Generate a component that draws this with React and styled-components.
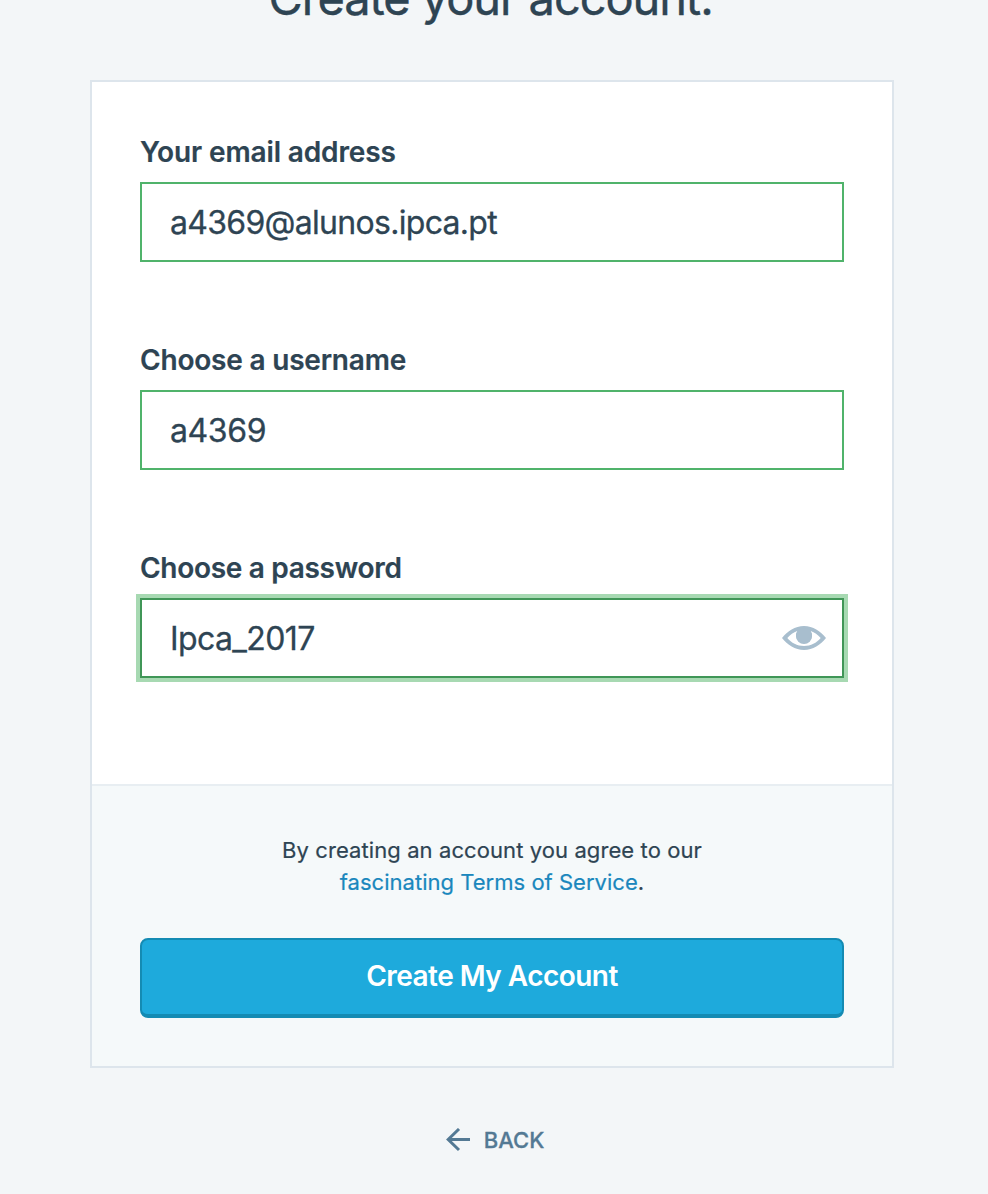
import React from 'react';
import styled, { createGlobalStyle } from 'styled-components';

const Global = createGlobalStyle`
  * { box-sizing: border-box; }
  html, body { margin: 0; height: 1194px; overflow: hidden; background: #f3f6f8; }
  body { font-family: Inter, sans-serif; color: #2e4453; }
`;
const Page = styled.main`
  display: flex; flex-direction: column; align-items: center;
  width: 988px; height: 1194px; padding-right: 4px; overflow: hidden;
`;
const Title = styled.h1`
  margin: -30px 3px 54px 0; height: 56px; line-height: 56px;
  font-size: 47px; font-weight: 400; white-space: nowrap;
  letter-spacing: -1.1px; -webkit-text-stroke: 0.4px currentColor;
`;
const Card = styled.form`
  width: 804px; height: 988px; flex: none; border: 2px solid #dde5ec; background: #fff;
  display: flex; flex-direction: column;
`;
const Fields = styled.div`
  height: 702px; padding: 48px 48px 0;
`;
const Field = styled.div`
  height: 208px;
`;
const Label = styled.label`
  display: block; height: 52px; line-height: 44px; font-size: 28px; font-weight: 600;
  white-space: nowrap; letter-spacing: ${p => p.$ls}px;
  -webkit-text-stroke: 0.2px currentColor;
`;
const InputBox = styled.div`
  height: 80px; display: flex; align-items: center; justify-content: space-between;
  padding: 0 16px 0 28px; background: #fff;
  border: 2px solid ${p => (p.$focus ? '#409657' : '#50b36b')};
  box-shadow: ${p => (p.$focus ? '0 0 0 4px #a7d9b2' : 'none')};
`;
const Value = styled.span`
  padding-top: 2px; font-size: 32px; line-height: 48px; white-space: nowrap;
  letter-spacing: ${p => p.$ls}px; -webkit-text-stroke: 0.3px currentColor;
`;
const Footer = styled.div`
  flex: 1; border-top: 2px solid #e8eef2; background: #f5f9fa; padding: 48px;
`;
const Terms = styled.p`
  margin: 0 0 40px; text-align: center; font-size: 22px; line-height: 32px; letter-spacing: 0.09px;
  -webkit-text-stroke: 0.2px currentColor;
`;
const Link = styled.a`color: #1a87bd; letter-spacing: 0.02px;`;
const Button = styled.button`
  display: block; width: 100%; height: 80px; border: 2px solid #148bb3; border-bottom-width: 4px;
  border-radius: 8px; background: #1eaadc; color: #fff;
  font: 600 28px/1 Inter, sans-serif; padding: 0 0 2px; letter-spacing: -0.53px;
`;
const Back = styled.a`
  display: flex; align-items: center; gap: 14px; margin: 56px 0 0 6px; height: 32px;
  font-size: 22px; font-weight: 500; color: #537994; -webkit-text-stroke: 0.3px currentColor;
`;

const Eye = () => (
  <svg width="44" height="24" viewBox="0 0 44 24">
    <path
      fill="#a8bece" fillRule="evenodd"
      d="M0 12C5.5 5.2 13 0 22 0S38.500 5.200 44 12C38.500 18.800 31 24 22 24S5.500 18.800 0 12ZM5.300 12C9.500 16.800 15 20 22 20S34.500 16.800 38.700 12C35.800 8.700 32.600 6.200 28.700 5A8 8 0 1 1 15.300 5C11.400 6.200 8.200 8.700 5.300 12Z"
    />
    <circle cx="22" cy="10" r="8" fill="#a8bece" />
  </svg>
);
const Arrow = () => (
  <svg width="24" height="24" viewBox="0 0 24 24" fill="none" stroke="#537994" strokeWidth="3">
    <path d="M24 11.500H2.500M13 1L2.200 11.500L13 22" />
  </svg>
);

export default function App() {
  return (
    <Page>
      <Global />
      <Title>Create your account.</Title>
      <Card>
        <Fields>
          <Field>
            <Label $ls={-0.12}>Your email address</Label>
            <InputBox><Value $ls={-0.7}>a4369@alunos.ipca.pt</Value></InputBox>
          </Field>
          <Field>
            <Label $ls={-0.2}>Choose a username</Label>
            <InputBox><Value $ls={-0.4}>a4369</Value></InputBox>
          </Field>
          <Field>
            <Label $ls={-0.3}>Choose a password</Label>
            <InputBox $focus><Value $ls={-0.6}>Ipca_2017</Value><Eye /></InputBox>
          </Field>
        </Fields>
        <Footer>
          <Terms>By creating an account you agree to our<br /><Link>fascinating Terms of Service</Link>.</Terms>
          <Button type="button">Create My Account</Button>
        </Footer>
      </Card>
      <Back><Arrow />BACK</Back>
    </Page>
  );
}
